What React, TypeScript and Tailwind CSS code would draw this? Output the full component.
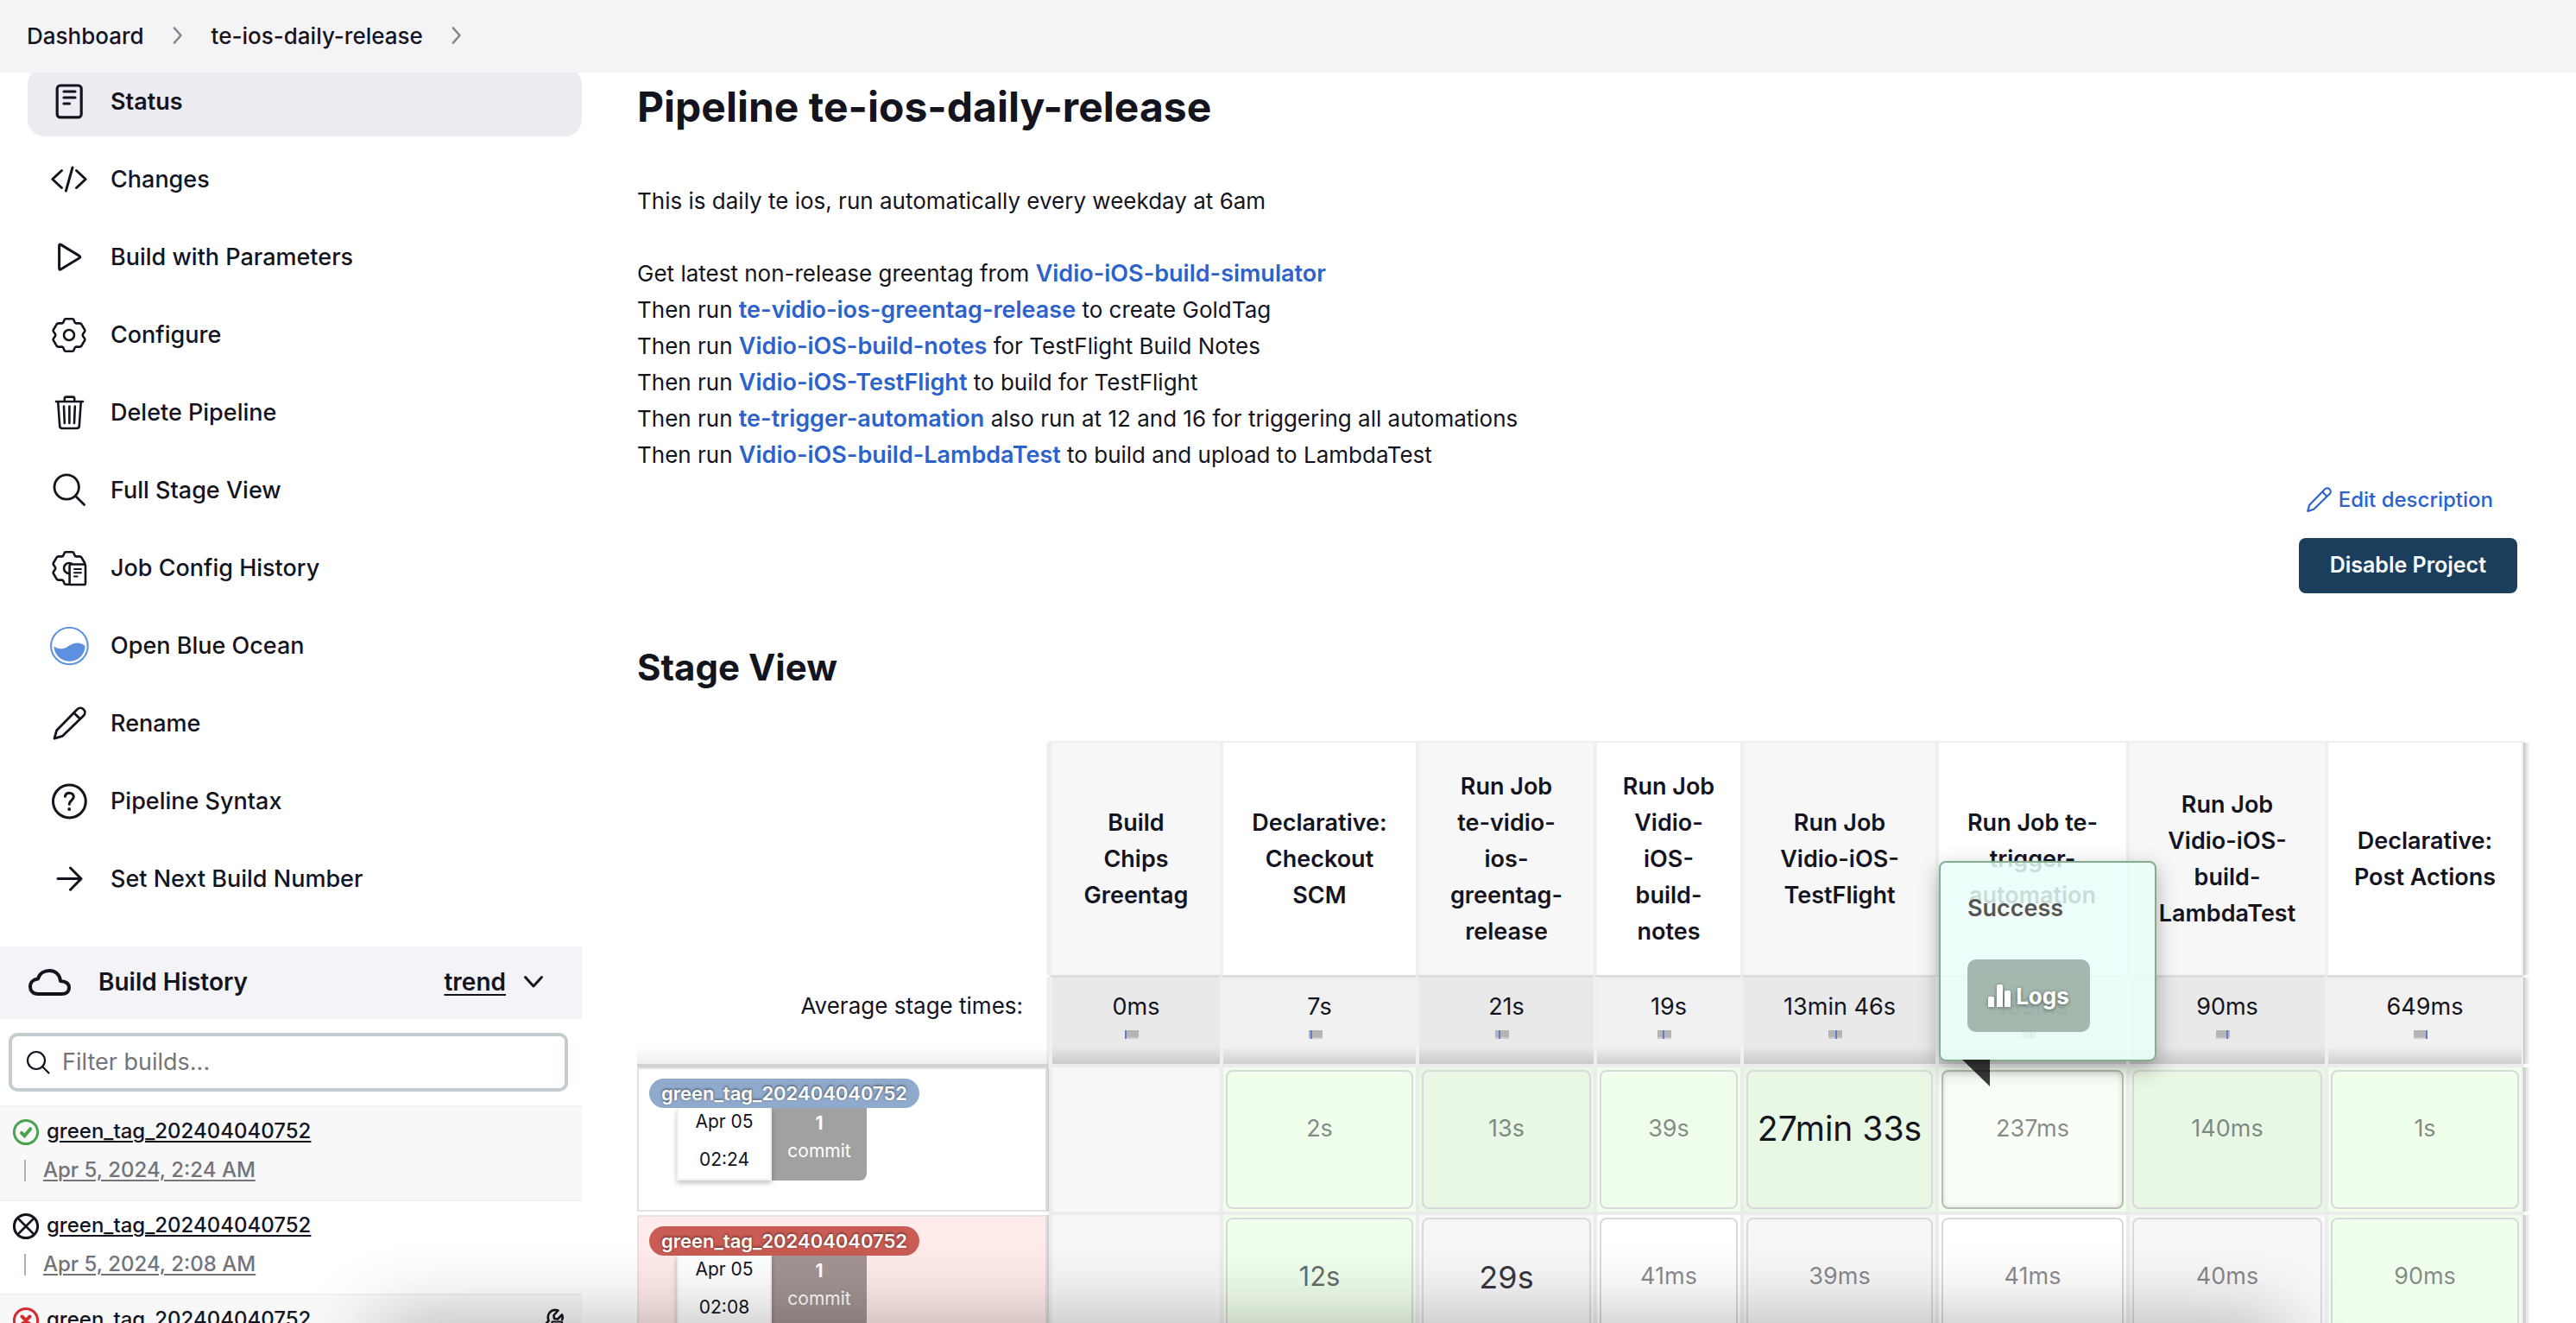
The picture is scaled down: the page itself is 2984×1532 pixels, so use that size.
import type { ReactNode } from "react";

function Icon({ children, width = 3 }: { children: ReactNode; width?: number }) {
  return (
    <svg
      viewBox="0 0 48 48"
      className="size-12 shrink-0"
      fill="none"
      stroke="currentColor"
      strokeWidth={width}
      strokeLinecap="round"
      strokeLinejoin="round"
      aria-hidden="true"
    >
      {children}
    </svg>
  );
}

const GEAR =
  "M20 5.2h8q1 0 1.4 1l1.2 3q.5 1.2 1.7 1.2h4q1.4 0 2 1l3.9 6.6q.6 1.1-.2 2l-1.9 2.8q-1 1.2 0 2.4l1.9 2.8q.8.9.2 2l-3.9 6.6q-.6 1-2 1h-4q-1.2 0-1.7 1.2l-1.2 3q-.4 1-1.4 1h-8q-1 0-1.4-1l-1.2-3q-.5-1.2-1.7-1.2h-4q-1.4 0-2-1l-3.9-6.6q-.6-1.1.2-2l1.9-2.8q1-1.2 0-2.4l-1.9-2.8q-.8-.9-.2-2l3.9-6.6q.6-1 2-1h4q1.2 0 1.7-1.2l1.2-3q.4-1 1.4-1z";

const PENCIL = (
  <>
    <path d="M7 41.2l2.6-9.4L33.4 7.4a5.2 5.2 0 0 1 7.4 7.4L16.2 38.4z" />
    <path d="M29.6 11.4l7.2 7.2" />
  </>
);

const NAV: { label: string; icon: ReactNode }[] = [
  {
    label: "Status",
    icon: (
      <Icon width={3.2}>
        <rect x="10.2" y="5" width="28" height="36.8" rx="3.6" />
        <path d="M18 12h13M18 19h13M18 26h6.5" />
      </Icon>
    ),
  },
  {
    label: "Changes",
    icon: (
      <Icon>
        <path d="M15.5 13.5L4.8 23.5l10.7 10M32.5 13.5l10.7 10-10.7 10M28 10l-7.6 27" />
      </Icon>
    ),
  },
  {
    label: "Build with Parameters",
    icon: (
      <Icon>
        <path d="M12.6 10.6v26q0 2.4 2 1.2l21.4-13q1.8-1.2 0-2.4l-21.4-13q-2-1.2-2 1.2z" />
      </Icon>
    ),
  },
  {
    label: "Configure",
    icon: (
      <Icon width={2.6}>
        <path d={GEAR} />
        <circle cx="24" cy="24" r="6" />
      </Icon>
    ),
  },
  {
    label: "Delete Pipeline",
    icon: (
      <Icon width={2.6}>
        <path d="M9 11h31M11.2 11l2 28.4q.2 2.6 2.8 2.6h17q2.6 0 2.8-2.6l2-28.4M18.8 10.5V7.600q0-2 2-2h7.400q2 0 2 2v2.900M24.400 16.500V36M18 16.500l.8 19.500M30.800 16.500L30 36" />
      </Icon>
    ),
  },
  {
    label: "Full Stage View",
    icon: (
      <Icon width={2.8}>
        <circle cx="21.200" cy="20" r="14.200" />
        <path d="M31.500 30.400L41.600 40.500" />
      </Icon>
    ),
  },
  {
    label: "Job Config History",
    icon: (
      <Icon width={2.6}>
        <path d={GEAR} />
        <circle cx="24" cy="24" r="6" />
        <rect x="24.6" y="19.500" width="18.400" height="23.500" rx="1.800" fill="#fff" />
        <path d="M30 25h8M30 29.300h8M30 33.600h3.600" strokeWidth="2" />
      </Icon>
    ),
  },
  {
    label: "Open Blue Ocean",
    icon: (
      <svg viewBox="0 0 48 48" className="size-12 shrink-0" aria-hidden="true">
        <circle cx="24.400" cy="24" r="21.300" fill="none" stroke="#5d90e0" strokeWidth="2" />
        <path
          d="M6.500 24.200C9 26 12 27.600 16 27.200c6.500-.6 10-6.700 17.500-6.700 3.500 0 6.500 1.200 9.100 3.500C42.600 34 34.500 41.800 24.600 41.800S6.700 34 6.500 24.200z"
          fill="#5d90e0"
        />
      </svg>
    ),
  },
  { label: "Rename", icon: <Icon width={2.8}>{PENCIL}</Icon> },
  {
    label: "Pipeline Syntax",
    icon: (
      <Icon>
        <circle cx="24.400" cy="24" r="18.900" />
        <path d="M19.400 18.200c.4-2.600 2.400-3.900 4.900-3.900 2.900 0 5 1.700 5 4.300 0 4.300-5 4-5 8.600" />
        <circle cx="24.200" cy="33" r="1" fill="currentColor" strokeWidth="1.800" />
      </Icon>
    ),
  },
  {
    label: "Set Next Build Number",
    icon: (
      <Icon>
        <path d="M11 23.600h26.500M25.500 11l12.500 12.600L25.500 36.200" />
      </Icon>
    ),
  },
];

const BUILDS: { state: "ok" | "aborted" | "failed"; date: string }[] = [
  { state: "ok", date: "Apr 5, 2024, 2:24 AM" },
  { state: "aborted", date: "Apr 5, 2024, 2:08 AM" },
  { state: "failed", date: "" },
];

function StateIcon({ state }: { state: "ok" | "aborted" | "failed" }) {
  const common = { viewBox: "0 0 32 32", className: "size-8 shrink-0", fill: "none", strokeLinecap: "round" as const };
  if (state === "ok")
    return (
      <svg {...common} stroke="#4ba54f" role="img" aria-label="Success">
        <circle cx="16" cy="16" r="13.600" strokeWidth="3" />
        <path d="M11 16.800l3.400 3.400 6.800-8" strokeWidth="4" />
      </svg>
    );
  if (state === "aborted")
    return (
      <svg {...common} stroke="#14141f" role="img" aria-label="Aborted">
        <circle cx="16" cy="16" r="13.600" strokeWidth="3" />
        <path d="M8 8l16 16M24 8L8 24" strokeWidth="2.600" />
      </svg>
    );
  return (
    <svg {...common} stroke="#d62a2f" role="img" aria-label="Failed">
      <circle cx="16" cy="16" r="13.600" strokeWidth="3" />
      <path d="M11.500 11.500l9 9M20.500 11.500l-9 9" strokeWidth="4" />
    </svg>
  );
}

const STEPS = [
  ["Get latest non-release greentag from ", "Vidio-iOS-build-simulator", ""],
  ["Then run ", "te-vidio-ios-greentag-release", " to create GoldTag"],
  ["Then run ", "Vidio-iOS-build-notes", " for TestFlight Build Notes"],
  ["Then run ", "Vidio-iOS-TestFlight", " to build for TestFlight"],
  ["Then run ", "te-trigger-automation", " also run at 12 and 16 for triggering all automations"],
  ["Then run ", "Vidio-iOS-build-LambdaTest", " to build and upload to LambdaTest"],
];

const STAGES = [
  { name: ["Build", "Chips", "Greentag"], avg: "0ms", mark: 0 },
  { name: ["Declarative:", "Checkout", "SCM"], avg: "7s", mark: 2 },
  { name: ["Run Job", "te-vidio-", "ios-", "greentag-", "release"], avg: "21s", mark: 4 },
  { name: ["Run Job", "Vidio-", "iOS-", "build-", "notes"], avg: "19s", mark: 6 },
  { name: ["Run Job", "Vidio-iOS-", "TestFlight"], avg: "13min 46s", mark: 8 },
  { name: ["Run Job te-", "trigger-", "automation"], avg: "139ms", mark: 10 },
  { name: ["Run Job", "Vidio-iOS-", "build-", "LambdaTest"], avg: "90ms", mark: 12 },
  { name: ["Declarative:", "Post Actions"], avg: "649ms", mark: 14 },
];

type Run = { time: string; failed: boolean; cells: { text: string; green: boolean; size: string }[] };

const SMALL = "text-[27px] text-[#14141f]/50";

const RUNS: Run[] = [
  {
    time: "02:24",
    failed: false,
    cells: [
      { text: "", green: false, size: "" },
      { text: "2s", green: true, size: SMALL },
      { text: "13s", green: true, size: SMALL },
      { text: "39s", green: true, size: SMALL },
      { text: "27min 33s", green: true, size: "text-[39px] text-[#14141f]" },
      { text: "237ms", green: true, size: SMALL },
      { text: "140ms", green: true, size: SMALL },
      { text: "1s", green: true, size: SMALL },
    ],
  },
  {
    time: "02:08",
    failed: true,
    cells: [
      { text: "", green: false, size: "" },
      { text: "12s", green: true, size: "text-[31px] text-[#14141f]/65" },
      { text: "29s", green: false, size: "text-[36px] text-[#14141f]/85" },
      { text: "41ms", green: false, size: SMALL },
      { text: "39ms", green: false, size: SMALL },
      { text: "41ms", green: false, size: SMALL },
      { text: "40ms", green: false, size: SMALL },
      { text: "90ms", green: true, size: SMALL },
    ],
  },
];

function edge(i: number) {
  if (i === 0)
    return "before:absolute before:inset-y-0 before:-left-2 before:w-1 before:bg-gradient-to-l before:from-black/10 before:to-transparent";
  if (i === 7)
    return "border-r-3 after:absolute after:inset-y-0 after:-right-2.5 after:w-2 after:bg-gradient-to-r after:from-black/20 after:to-transparent";
  return "";
}

function Popup() {
  return (
    <div className="absolute bottom-[174px] left-0 z-10 h-[232px] w-[252px] rounded-lg border-2 border-[#84ad8c] bg-[#e9fff9]/85 px-[31px] text-left shadow-[0_8px_24px_rgba(0,0,0,0.3)]">
      <div className="mt-8 text-[27px]/[42px] font-semibold text-[#555] [text-shadow:0_2px_2px_#fff]">Success</div>
      <button
        type="button"
        className="mt-[38px] flex h-[84px] w-[142px] items-center justify-center gap-1.5 rounded-[10px] bg-[#8ca095]/75 text-[26px] font-bold text-white [text-shadow:0_1px_4px_rgba(0,0,0,0.5)]"
      >
        <svg viewBox="0 0 26 26" className="size-[26px] drop-shadow-[0_1px_2px_rgba(0,0,0,0.4)]" fill="#fff" aria-hidden="true">
          <path d="M0 26V16q0-2 2-2h3q2 0 2 2v10zM10 26V2q0-2 2-2h3q2 0 2 2v24zM19 26V9q0-2 2-2h3q2 0 2 2v17z" />
        </svg>
        Logs
      </button>
      <svg viewBox="0 0 32 31" className="absolute top-full left-[25px] h-[31px] w-8" aria-hidden="true">
        <path d="M0 0H32V31z" fill="#000" fillOpacity=".77" />
      </svg>
    </div>
  );
}

function StageTable() {
  return (
    <table className="mt-[59px] w-full table-fixed border-separate border-spacing-0 text-center">
      <colgroup>
        <col className="w-[477px]" />
        <col className="w-[198px]" />
        <col className="w-[227px]" />
        <col className="w-[206px]" />
        <col className="w-[170px]" />
        <col className="w-[226px]" />
        <col className="w-[221px]" />
        <col className="w-[230px]" />
        <col className="w-[231px]" />
      </colgroup>
      <thead>
        <tr className="h-[271px]">
          <td />
          {STAGES.map((s, i) => (
            <th
              key={i}
              scope="col"
              className={
                "relative border-t-2 border-l-4 border-[#f0f0f1] text-[27px]/[42px] font-semibold " +
                (i % 2 ? "bg-white " : "bg-[#f7f7f7] ") +
                edge(i)
              }
            >
              {s.name.map((line) => (
                <div key={line} className="whitespace-nowrap">
                  {line}
                </div>
              ))}
            </th>
          ))}
        </tr>
        <tr className="h-[107px]">
          <th
            scope="row"
            className="border-b-4 border-[#d2d2d2] bg-linear-to-b from-white from-80% to-[#efefef] pr-[30px] pb-8 text-right text-[26px]/[42px] font-normal"
          >
            Average stage times:
          </th>
          {STAGES.map((s, i) => (
            <td
              key={i}
              className={
                "relative border-t-3 border-b-4 border-l-4 border-t-[#dcdcdc] border-r-[#f0f0f1] border-b-[#ececec] border-l-[#f0f0f1] bg-linear-to-b from-80% text-[27px]/[42px] " +
                (i % 2 ? "from-[#f1f1f1] to-[#cfcfcf] " : "from-[#e9e9e9] to-[#c9c9c9] ") +
                edge(i)
              }
            >
              <div>{s.avg}</div>
              <svg viewBox="0 0 16 10" className="mx-auto mt-1.5 mb-4 h-2.5 w-[26px] pr-2.5" aria-hidden="true">
                <path d="M0 0h16v10H0z" fill="#cdcdcd" />
                <path d="M0 0h16v8H0z" fill="#b4b4b4" />
                <path d="M0 0h2v10h-2z" fill="#5b7fd0" transform={`translate(${s.mark} 0)`} />
              </svg>
            </td>
          ))}
        </tr>
      </thead>
      <tbody>
        {RUNS.map((run, r) => (
          <tr key={run.time} className="h-[171px]">
            <th scope="row" className="p-0 pb-1 text-left align-top font-normal">
              <div
                className={
                  "h-[167px] border-2 border-r-4 border-[#e2e2e4] px-3 pt-[11px] " + (run.failed ? "bg-[#ffebe9]" : "bg-white")
                }
              >
                <span
                  className={
                    "relative z-1 flex h-[34px] w-fit items-center rounded-full px-[14px] text-[22px] font-semibold text-white [text-shadow:0_-1px_3px_rgba(0,0,0,0.6)] " +
                    (run.failed ? "bg-[#c95c54]" : "bg-[#8faacc]")
                  }
                >
                  green_tag_202404040752
                </span>
                <div className="ml-8 flex h-[84px] w-fit text-center text-[21px]">
                  <div className="w-[110px] border-2 border-t-0 border-[#f0f0f5] bg-white shadow-[0_3px_6px_rgba(0,0,0,0.25)]">
                    <div className="leading-8">Apr 05</div>
                    <div className="mt-3 leading-8">{run.time}</div>
                  </div>
                  <div className="w-[110px] rounded-br-lg bg-black/37 text-white">
                    <div className="pt-0.5 leading-8 font-bold">1</div>
                    <div className="leading-8">commit</div>
                  </div>
                </div>
              </div>
            </th>
            {run.cells.map((c, i) => {
              const hovered = r === 0 && i === 5;
              const bg = c.green ? (i % 2 ? "bg-[#f0ffeb]" : "bg-[#e9f8e4]") : i % 2 ? "bg-white" : "bg-[#f7f7f7]";
              return (
                <td key={i} className={"relative border-b-4 border-l-4 border-[#ececed] p-[3px] " + bg + " " + edge(i)}>
                  {c.text && (
                    <div
                      className={
                        "flex h-[161px] items-center justify-center rounded-lg border-2 pb-6 whitespace-nowrap " +
                        (hovered
                          ? "border-[#b9b9b9] bg-[#f9fff6] shadow-[inset_0_0_6px_rgba(0,0,0,0.15)] "
                          : "border-[#d9d9dd] ") +
                        c.size
                      }
                    >
                      {c.text}
                    </div>
                  )}
                  {hovered && <Popup />}
                </td>
              );
            })}
          </tr>
        ))}
      </tbody>
    </table>
  );
}

function Sidebar() {
  return (
    <aside className="w-[674px] shrink-0">
      <nav aria-label="Tasks" className="-mt-1.5 flex flex-col gap-2.5 pl-8">
        {NAV.map((n, i) => (
          <a
            key={n.label}
            href="#"
            className={
              "flex h-20 items-center gap-6 rounded-[20px] pl-6 text-[27px] " +
              (i === 0 ? "bg-[#edecf2] font-semibold" : "font-medium")
            }
          >
            {n.icon}
            {n.label}
          </a>
        ))}
      </nav>

      <div className="mt-[38px] flex h-[84px] items-center bg-[#f3f3f8] pr-[44px] pb-0.5 pl-[33px] text-[28px] font-semibold">
        <svg viewBox="0 0 49 31" className="h-[31px] w-[49px]" fill="none" stroke="currentColor" strokeWidth="4" strokeLinejoin="round" aria-hidden="true">
          <path d="M11 29C5 29 2 25 2 20.500 2 15.500 5.500 12 11 11.500 12.500 5.500 18 2 24.500 2 31.500 2 36.500 7 37 14c6 .5 10 3 10 7.500C47 26.500 43.500 29 38.500 29z" />
        </svg>
        <h2 className="ml-8 grow">Build History</h2>
        <a href="#" className="underline decoration-2 underline-offset-4">
          trend
        </a>
        <button type="button" aria-label="Collapse" className="ml-5">
          <svg viewBox="0 0 24 16" className="h-4 w-6" fill="none" stroke="currentColor" strokeWidth="3" strokeLinecap="round" strokeLinejoin="round" aria-hidden="true">
            <path d="M2.500 2.500L12 13l9.500-10.500" />
          </svg>
        </button>
      </div>

      <label className="mt-4 mr-4 ml-2.5 flex h-[68px] items-center gap-[14px] rounded-[10px] border-4 border-[#c3cccf] pl-4">
        <svg viewBox="0 0 28 28" className="size-7" fill="none" stroke="currentColor" strokeWidth="2.200" strokeLinecap="round" aria-hidden="true">
          <circle cx="12" cy="12" r="10" />
          <path d="M19.200 19.200L26.500 26.500" />
        </svg>
        <input
          type="search"
          aria-label="Filter builds"
          placeholder="Filter builds..."
          className="min-w-0 grow bg-transparent text-[27px] outline-none placeholder:text-[#757575]"
        />
      </label>

      <ul className="mt-4">
        {BUILDS.map((b, i) => (
          <li
            key={i}
            className={"relative h-[109px] border-t-2 border-[#f1f1f5] pt-3 pl-3.5 " + (i % 2 ? "bg-white" : "bg-[#f8f8f8]")}
          >
            <div className="flex h-[34px] items-center gap-2 text-[24px] font-medium">
              <StateIcon state={b.state} />
              <a href="#" className="pb-0.5 underline decoration-2 underline-offset-3">
                green_tag_202404040752
              </a>
            </div>
            {b.date && (
              <div className="mt-2.5 ml-3.5 flex h-[34px] items-center gap-5 text-[24px] font-medium text-[#737378]">
                <span className="h-[25px] w-0.5 bg-[#a9b3ba]" />
                <a href="#" className="underline decoration-2 underline-offset-3">
                  {b.date}
                </a>
              </div>
            )}
            {b.state === "failed" && (
              <svg viewBox="0 0 32 32" className="absolute top-3.5 right-5 size-8" fill="none" stroke="#14141f" strokeWidth="2.600" strokeLinejoin="round" aria-label="Config changed">
                <path d="M2 28L13.500 15.500q-2-6 1.500-10 4-4 9.500-2L19.500 9l.5 4 4 .5L29 8.500q1.500 3-.2 6.500M2 28l3 3 9-8" />
                <path d="M17.500 16.500h11.500v14H17.500z" fill="#fff" strokeWidth="2" />
                <path d="M20.500 21h5.500M20.500 25h5.500" strokeWidth="2" />
              </svg>
            )}
          </li>
        ))}
      </ul>
    </aside>
  );
}

function Crumb() {
  return (
    <svg viewBox="0 0 12 20" className="mx-[33px] h-5 w-3" fill="none" stroke="#84848c" strokeWidth="2.600" strokeLinecap="round" strokeLinejoin="round" aria-hidden="true">
      <path d="M2 1.500L9.500 10 2 18.500" />
    </svg>
  );
}

export default function App() {
  return (
    <div className="relative flex h-screen flex-col overflow-hidden bg-white font-['Inter',sans-serif] text-[#14141f]">
      <header className="relative z-20 flex h-[84px] shrink-0 items-center bg-[#f4f4f7] px-[31px] pb-0.5 text-[26px] font-medium">
        <a href="#">Dashboard</a>
        <Crumb />
        <a href="#">te-ios-daily-release</a>
        <Crumb />
      </header>

      <div className="flex min-h-0 grow">
        <Sidebar />
        <main className="min-w-0 grow pr-[60px] pl-16">
          <h1 className="mt-2.5 text-[48px]/[60px] font-bold">Pipeline te-ios-daily-release</h1>

          <div className="mt-[58px] text-[26px]/[42px]">
            <p>This is daily te ios, run automatically every weekday at 6am</p>
            <div className="mt-[42px]">
              {STEPS.map(([before, link, after]) => (
                <p key={link} className="h-[42px]">
                  {before}
                  <a href="#" className="text-[27px] font-semibold text-[#2b62cc]">
                    {link}
                  </a>
                  {after}
                </p>
              ))}
            </div>
          </div>

          <div className="mr-2 flex flex-col items-end">
            <a href="#" className="mt-[13px] mr-7 flex h-9 items-center gap-2 text-[24px] font-medium text-[#2b62cc]">
              <svg viewBox="4 4 40 40" className="size-[30px]" fill="none" stroke="currentColor" strokeWidth="2.800" strokeLinejoin="round" aria-hidden="true">
                {PENCIL}
              </svg>
              Edit description
            </a>
            <button type="button" className="mt-[26px] h-16 rounded-lg bg-[#1c3e5d] px-9 text-[25px] font-semibold text-white">
              Disable Project
            </button>
          </div>

          <h2 className="mt-[60px] text-[42px]/[52px] font-bold">Stage View</h2>
          <StageTable />
        </main>
      </div>

      <div className="pointer-events-none absolute top-full right-[340px] left-[440px] z-30 h-40 shadow-[0_0_90px_rgba(0,0,0,0.3)]" />
    </div>
  );
}
